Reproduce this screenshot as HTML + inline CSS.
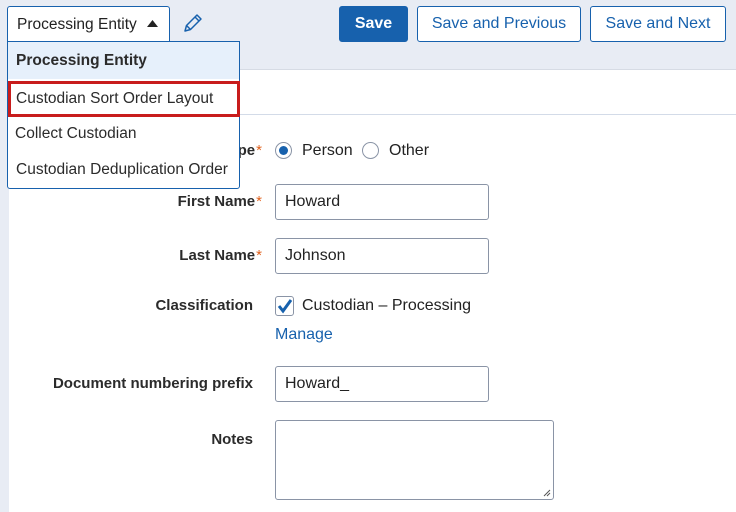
<!DOCTYPE html>
<html><head><style>
*{box-sizing:border-box;margin:0;padding:0}
body{width:736px;height:512px;background:#e8ecf4;font-family:"Liberation Sans",sans-serif;font-size:16px;color:#222;position:relative;overflow:hidden}
.abs{position:absolute}
.panel{left:9px;top:69px;width:727px;height:443px;background:#fff;border-top:1px solid #d6dbe4}
.hr{left:9px;top:114px;width:727px;height:1px;background:#d3dbe8}
.btn{top:6px;height:36px;border:1px solid #1761ad;border-radius:3px;background:#fff;color:#1761ad;display:flex;align-items:center;justify-content:center;font-size:16px}
.label{right:484px;font-weight:bold;font-size:15px;color:#2b2b2b;text-align:right;white-space:nowrap}
.star{color:#e0601b;font-weight:normal;margin-left:1px}
.inp{left:275px;height:36px;border:1px solid #8a94a6;border-radius:3px;padding:0 9px;display:flex;align-items:center;font-size:16px}
.menu{left:7px;top:41px;width:233px;height:148px;background:#fff;border:1px solid #1761ad;border-radius:0 0 3px 3px}
.item{position:absolute;left:8px;font-size:15.5px;color:#2b2b2b;white-space:nowrap}
</style></head><body>
<div class="abs panel"></div>
<div class="abs hr"></div>

<div class="abs" style="left:7px;top:6px;width:163px;height:36px;background:#fff;border:1px solid #1761ad;border-bottom:none;border-radius:3px 3px 0 0;padding:9px 0 0 9px;font-size:15.5px">Processing Entity <svg style="margin-left:6px;position:relative;top:-2px" width="11" height="7" viewBox="0 0 11 7"><path d="M0 7 L5.5 0 L11 7Z" fill="#222"/></svg></div>
<svg class="abs" style="left:182px;top:12px" width="22" height="22" viewBox="0 0 22 22"><path d="M3 19 L4.5 13.5 L15 3 L19 7 L8.5 17.5 Z M13 5 L17 9 M4.5 13.5 L8.5 17.5" fill="none" stroke="#1761ad" stroke-width="1.5" stroke-linejoin="round"/></svg>

<div class="abs btn" style="left:339px;width:69px;background:#1761ad;color:#fff;font-weight:bold">Save</div>
<div class="abs btn" style="left:417px;width:164px">Save and Previous</div>
<div class="abs btn" style="left:590px;width:136px">Save and Next</div>

<div class="abs label" style="top:142px;right:474px">Type<span class="star">*</span></div>
<div class="abs" style="left:275px;top:142px;width:17px;height:17px;border:1px solid #8a94a6;border-radius:50%"><div style="margin:3px;width:9px;height:9px;border-radius:50%;background:#1761ad"></div></div>
<div class="abs" style="left:302px;top:142px">Person</div>
<div class="abs" style="left:362px;top:142px;width:17px;height:17px;border:1px solid #8a94a6;border-radius:50%"></div>
<div class="abs" style="left:389px;top:142px">Other</div>

<div class="menu abs">
<div style="position:absolute;left:0;top:0;width:231px;height:37px;background:#e6f0fb"></div>
<div class="item" style="top:10px;font-weight:bold">Processing Entity</div>
<div style="position:absolute;left:0;top:39px;width:232px;height:36px;border:3px solid #c81c1c"></div>
<div class="item" style="top:48px">Custodian Sort Order Layout</div>
<div class="item" style="top:83px;left:7px">Collect Custodian</div>
<div class="item" style="top:119px">Custodian Deduplication Order</div>
</div>

<div class="abs label" style="top:193px;right:474px">First Name<span class="star">*</span></div>
<div class="abs inp" style="top:184px;width:214px">Howard</div>
<div class="abs label" style="top:247px;right:474px">Last Name<span class="star">*</span></div>
<div class="abs inp" style="top:238px;width:214px">Johnson</div>
<div class="abs label" style="top:297px;right:483px">Classification</div>
<div class="abs" style="left:275px;top:296px;width:19px;height:20px;border:1px solid #8a94a6;border-radius:3px"><svg width="17" height="18" viewBox="0 0 17 18"><path d="M3 9 L7 14 L15 3" fill="none" stroke="#1761ad" stroke-width="3"/></svg></div>
<div class="abs" style="left:302px;top:297px">Custodian – Processing</div>
<div class="abs" style="left:275px;top:326px;color:#1761ad">Manage</div>
<div class="abs label" style="top:375px;right:483px">Document numbering prefix</div>
<div class="abs inp" style="top:366px;width:214px">Howard_</div>
<div class="abs label" style="top:431px;right:483px">Notes</div>
<div class="abs" style="left:275px;top:420px;width:279px;height:80px;border:1px solid #8a94a6;border-radius:3px"><svg style="position:absolute;right:2px;bottom:2px" width="8" height="8" viewBox="0 0 8 8"><path d="M1 7 L7 1 M4 7 L7 4" stroke="#555" stroke-width="1"/></svg></div>
</body></html>
